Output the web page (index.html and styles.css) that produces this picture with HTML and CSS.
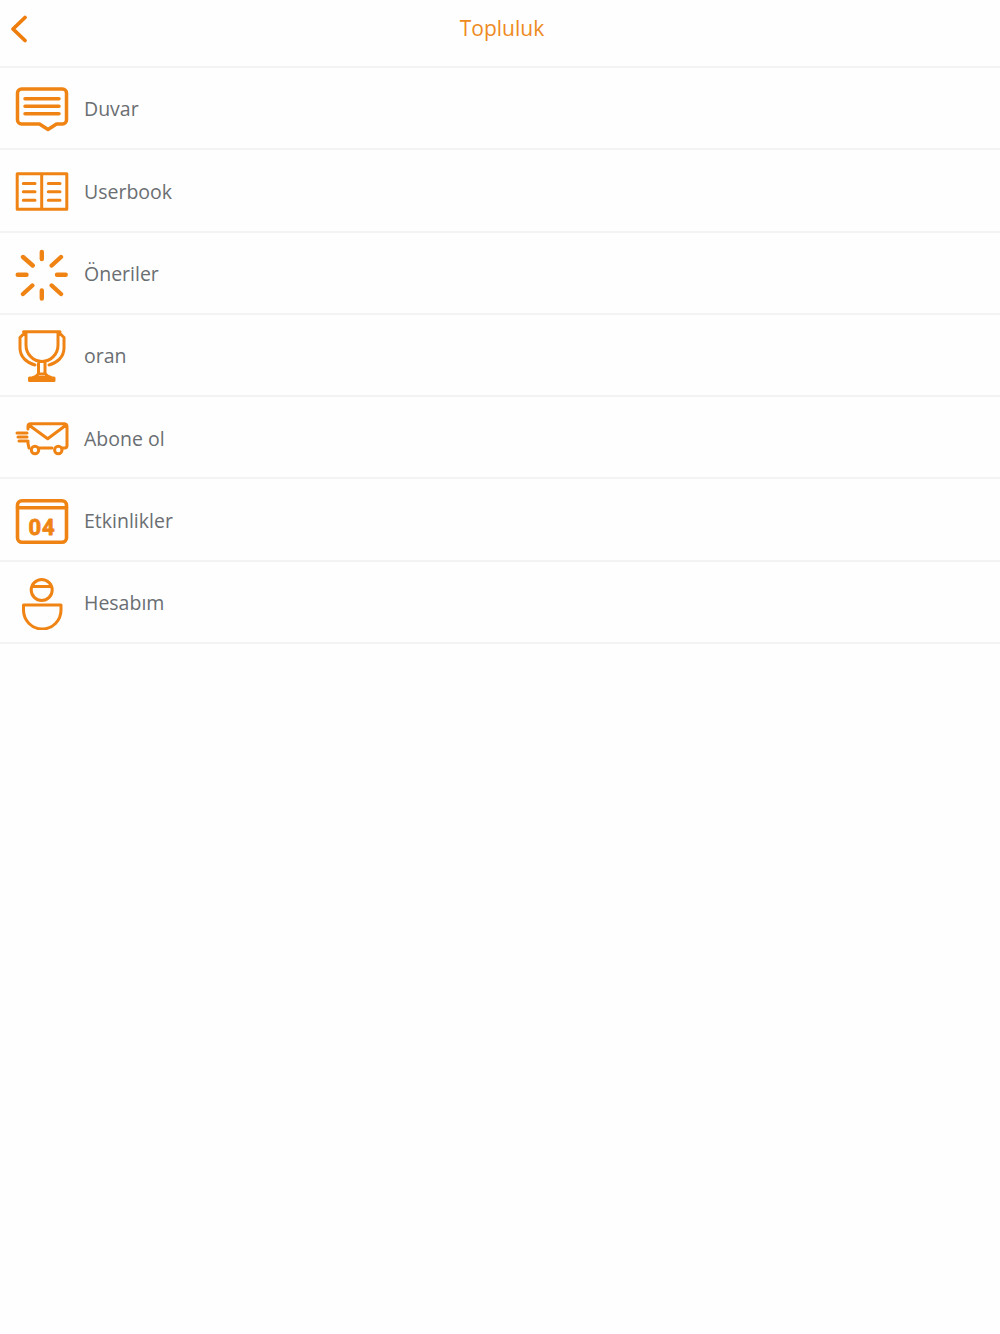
FILE: index.html
```html
<!DOCTYPE html>
<html lang="tr">
<head>
<meta charset="utf-8">
<title>Topluluk</title>
<link rel="stylesheet" href="styles.css">
</head>
<body>
<header class="topbar">
  <a class="back" aria-label="Geri">
    <svg class="back-icon" width="20" height="30" viewBox="0 0 20 30"><path d="M16 3.500 4 15l12 11.500"/></svg>
  </a>
  <h1 class="title">Topluluk</h1>
</header>
<ul class="menu">
  <li class="row">
    <svg class="icon" viewBox="0 0 56 56"><path d="M7.500 9H48.500a4 4 0 0 1 4 4V40a4 4 0 0 1-4 4H42.500L34 49.500 25.500 44H7.500a4 4 0 0 1-4-4V13a4 4 0 0 1 4-4Z"/><path d="M11 18.800H45M11 26.200H45M11 33.800H45"/></svg>
    <span class="label">Duvar</span>
  </li>
  <li class="row">
    <svg class="icon icon-thin" viewBox="0 0 56 56"><path d="M3.200 11.700H52.800V47.300H3.200ZM27.700 11.700V47.300M9.300 21.500H21M9.300 29.800H21M9.300 38.200H21M34.300 21.500H46M34.300 29.800H46M34.300 38.200H46"/></svg>
    <span class="label">Userbook</span>
  </li>
  <li class="row">
    <svg class="icon icon-bold" viewBox="0 0 56 56"><path d="M27.800 7V14M27.800 45.500V53.500M3.700 29.800H12.500M43 29.800H51.700M9 12 18.700 20.500M47 12 37.700 20.500M9 49 18.300 40.500M47 49 37.700 40.500"/></svg>
    <span class="label">Öneriler</span>
  </li>
  <li class="row">
    <svg class="icon icon-thin" viewBox="0 0 56 56"><path d="M9.500 4.700H46M12 4.700V18A16 16.500 0 0 0 44 18V4.700M10 6.500 6 10.500V21C6 30 13 36 21 38M46 6.500 50 10.500V21C50 30 43 36 35 38M24.500 35V47H31V35M24.500 46Q24 49 19 50.500H37Q32 49 31 46M15.500 51H40V53.500H15.500Z"/></svg>
    <span class="label">oran</span>
  </li>
  <li class="row">
    <svg class="icon icon-thin" viewBox="0 0 56 56"><path d="M14 20V17A2.500 2.500 0 0 1 16.500 14.700H50.500A3 3 0 0 1 53 17.500V36.500A2.500 2.500 0 0 1 50.500 39H48.500M38 39H25.500M15 39 14 34.500V32M14.500 15.700 33.700 29.800 52.500 15.700M3 24H13M4 28H13M5 32H13"/><circle cx="21" cy="41" r="3.700"/><circle cx="44.300" cy="41" r="3.700"/></svg>
    <span class="label">Abone ol</span>
  </li>
  <li class="row">
    <svg class="icon icon-mid" viewBox="0 0 56 56"><rect x="3.500" y="8.800" width="49" height="41.500" rx="4.500"/><path d="M3.500 15.800H52.500"/><text class="digits" x="28" y="42.500" text-anchor="middle">04</text></svg>
    <span class="label">Etkinlikler</span>
  </li>
  <li class="row">
    <svg class="icon icon-thin" viewBox="0 0 56 56"><circle cx="27.700" cy="16" r="10.500"/><path d="M18.500 12.500H37M9.500 31H47V36A18.750 19 0 0 1 9.500 36Z"/></svg>
    <span class="label">Hesabım</span>
  </li>
</ul>
</body>
</html>
```

FILE: styles.css
```css
* {
  box-sizing: border-box;
}

html,
body {
  margin: 0;
  padding: 0;
  background: #fefefe;
}

body {
  font-family: "Open Sans", "Liberation Sans", sans-serif;
  color: #6a6e72;
}

.topbar {
  display: grid;
  grid-template-columns: 1fr auto 1fr;
  align-items: center;
  height: 68px;
  padding-left: 4px;
  padding-bottom: 10px;
  border-bottom: 2px solid #f3f3f3;
}

.back {
  display: flex;
  margin-left: 5px;
  padding-top: 1px;
}

.back-icon {
  fill: none;
  stroke: #ee7d0c;
  stroke-width: 3.800;
  stroke-linecap: round;
  stroke-linejoin: round;
}

.title {
  margin: 0;
  font-size: 21px;
  font-weight: 400;
  color: #ee8a22;
}

.menu {
  margin: 0;
  padding: 0;
  list-style: none;
}

.row {
  display: flex;
  align-items: center;
  height: 82.300px;
  padding-left: 14px;
  border-bottom: 2px solid #f3f3f3;
}

.icon {
  flex: none;
  width: 56px;
  height: 56px;
  margin-right: 14px;
  fill: none;
  stroke: #ef8414;
  stroke-width: 3.500;
  stroke-linecap: round;
  stroke-linejoin: round;
}

.icon-thin {
  stroke-width: 3;
}

.icon-mid {
  stroke-width: 3.600;
}

.icon-bold {
  stroke-width: 4.400;
}

.digits {
  font-family: Roboto, "Liberation Sans", sans-serif;
  font-size: 22px;
  font-weight: 700;
  letter-spacing: 1px;
  fill: #ef8414;
  stroke: #ef8414;
  stroke-width: 0.800;
}

.label {
  padding-top: 2px;
  font-size: 19.500px;
  line-height: 1;
}
```
